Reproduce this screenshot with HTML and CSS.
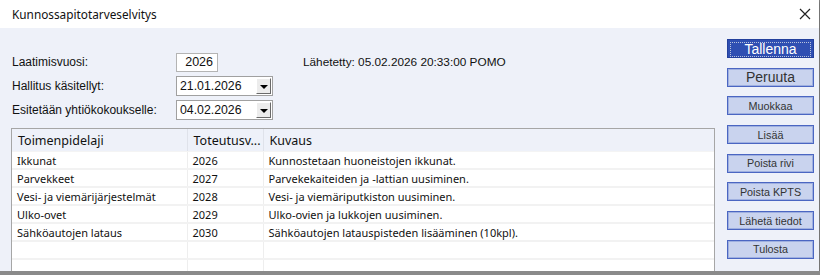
FILE: index.html
```html
<!DOCTYPE html>
<html lang="fi">
<head>
  <meta charset="UTF-8">
  <title>Kunnossapitotarveselvitys</title>
  <link rel="stylesheet" href="styles.css">
</head>
<body>

  <div class="window">
    <div class="titlebar">
      <span class="title">Kunnossapitotarveselvitys</span>
      <svg class="close" width="12" height="12" viewBox="0 0 12 12">
        <path d="M1 1 L11 11 M11 1 L1 11" stroke="#222" stroke-width="1.2" fill="none"/>
      </svg>
    </div>

    <div class="content">
      <div class="main">
        <div class="form">
          <div class="form-row">
            <label>Laatimisvuosi:</label>
            <div class="year-box">2026</div>
            <div class="sent">Lähetetty: 05.02.2026 20:33:00 POMO</div>
          </div>
          <div class="form-row">
            <label>Hallitus käsitellyt:</label>
            <div class="combo">
              <span>21.01.2026</span>
              <span class="combo-btn"><i class="arrow"></i></span>
            </div>
          </div>
          <div class="form-row">
            <label>Esitetään yhtiökokoukselle:</label>
            <div class="combo">
              <span>04.02.2026</span>
              <span class="combo-btn"><i class="arrow"></i></span>
            </div>
          </div>
        </div>

        <div class="grid-box">
          <table class="grid">
            <colgroup>
              <col class="c1"><col class="c2"><col class="c3">
            </colgroup>
            <thead>
              <tr><th>Toimenpidelaji</th><th>Toteutusv...</th><th>Kuvaus</th></tr>
            </thead>
            <tbody>
              <tr><td>Ikkunat</td><td>2026</td><td>Kunnostetaan huoneistojen ikkunat.</td></tr>
              <tr><td>Parvekkeet</td><td>2027</td><td>Parvekekaiteiden ja -lattian uusiminen.</td></tr>
              <tr><td>Vesi- ja viemärijärjestelmät</td><td>2028</td><td>Vesi- ja viemäriputkiston uusiminen.</td></tr>
              <tr><td>Ulko-ovet</td><td>2029</td><td>Ulko-ovien ja lukkojen uusiminen.</td></tr>
              <tr><td>Sähköautojen lataus</td><td>2030</td><td>Sähköautojen latauspisteden lisääminen (10kpl).</td></tr>
              <tr><td></td><td></td><td></td></tr>
              <tr><td></td><td></td><td></td></tr>
            </tbody>
          </table>
        </div>
      </div>

      <div class="actions">
        <button class="btn btn-primary big"><span>Tallenna</span></button>
        <button class="btn big">Peruuta</button>
        <button class="btn">Muokkaa</button>
        <button class="btn">Lisää</button>
        <button class="btn">Poista rivi</button>
        <button class="btn">Poista KPTS</button>
        <button class="btn">Lähetä tiedot</button>
        <button class="btn">Tulosta</button>
      </div>
    </div>
  </div>

</body>
</html>
```

FILE: styles.css
```css
body {
  margin: 0;
  background-color: #8a8a8a;
  font-family: "Liberation Sans", Arial, sans-serif;
  overflow: hidden;
}

.window {
  width: 819px;
  height: 271px;
  background-color: #eef1f9;
  display: flex;
  flex-direction: column;
  box-shadow: 0 1px 3px rgba(0, 0, 0, 0.4);
  overflow: hidden;
}

.titlebar {
  height: 28px;
  flex-shrink: 0;
  background-color: #ffffff;
  display: flex;
  align-items: center;
  justify-content: space-between;
  padding: 0 8px 0 12px;
}

.title {
  font-family: "Noto Sans", sans-serif;
  font-size: 11.8px;
  color: #111;
}

.content {
  flex: 1;
  display: flex;
  min-height: 0;
}

.main {
  flex: 1;
  display: flex;
  flex-direction: column;
  padding: 24px 0 0 11px;
  min-width: 0;
}

.form {
  display: flex;
  flex-direction: column;
  gap: 4px;
  padding-left: 1px;
}

.form-row {
  display: flex;
  align-items: center;
  height: 20px;
  font-size: 12px;
  color: #111;
}

.form-row label {
  width: 164px;
}

.year-box {
  width: 36px;
  height: 17px;
  border: 1px solid #b4b4b4;
  background-color: #fff;
  text-align: right;
  padding-right: 4px;
  line-height: 17px;
  font-size: 12.5px;
}

.sent {
  margin-left: 85px;
  font-size: 11.8px;
}

.combo {
  width: 92px;
  height: 18px;
  border: 1px solid #a0a0a0;
  background-color: #fff;
  display: flex;
  align-items: center;
  justify-content: space-between;
  padding-left: 3px;
  font-size: 12.3px;
}

.combo-btn {
  width: 15px;
  height: 16px;
  margin-right: 1px;
  background-color: #ececec;
  border-top: 1px solid #fff;
  border-left: 1px solid #fff;
  border-right: 1px solid #6a6a6a;
  border-bottom: 1px solid #6a6a6a;
  box-sizing: border-box;
  display: flex;
  align-items: center;
  justify-content: center;
}

.arrow {
  width: 0;
  height: 0;
  border-left: 4px solid transparent;
  border-right: 4px solid transparent;
  border-top: 4px solid #000;
  margin-top: 1px;
}

.grid-box {
  margin-top: 8px;
  width: 702px;
  flex: 1;
  border: 1px solid #a6a6a6;
  border-bottom: none;
  background-color: #fff;
  overflow: hidden;
}

.grid {
  border-collapse: collapse;
  table-layout: fixed;
  width: 100%;
  font-family: "Noto Sans", sans-serif;
  color: #111;
}

.c1 { width: 175px; }
.c2 { width: 76px; }

.grid th {
  height: 22px;
  background-color: #eef1f9;
  font-weight: normal;
  font-size: 12.5px;
  text-align: left;
  padding: 0 6px;
  border-right: 1px solid #dfe2ea;
  border-bottom: 1px solid #f4f4f4;
  white-space: nowrap;
  overflow: hidden;
}

.grid td {
  height: 16px;
  font-size: 11px;
  padding: 0 5px;
  border-right: 1px solid #eeeeee;
  border-bottom: 2px solid #f2f2f2;
  white-space: nowrap;
  overflow: hidden;
}

.grid th:last-child,
.grid td:last-child {
  border-right: none;
}

.actions {
  width: 87px;
  display: flex;
  flex-direction: column;
  gap: 9.7px;
  padding: 11px 5px 0 14px;
}

.btn {
  height: 19px;
  padding: 0;
  margin: 0;
  background-color: #c9d3ee;
  border: 1px solid #4b66c2;
  box-shadow: inset 0 0 0 1px #9fb0e0;
  font-family: "Liberation Sans", Arial, sans-serif;
  font-size: 10.8px;
  color: #333;
  cursor: pointer;
}

.btn.big {
  font-size: 14px;
}

.btn-primary {
  background-color: #2f4fb2;
  border-color: #23409c;
  box-shadow: none;
  color: #fff;
  padding: 2px;
}

.btn-primary span {
  display: block;
  height: 100%;
  line-height: 13px;
  border: 1px dotted #b9c3dd;
}
```
